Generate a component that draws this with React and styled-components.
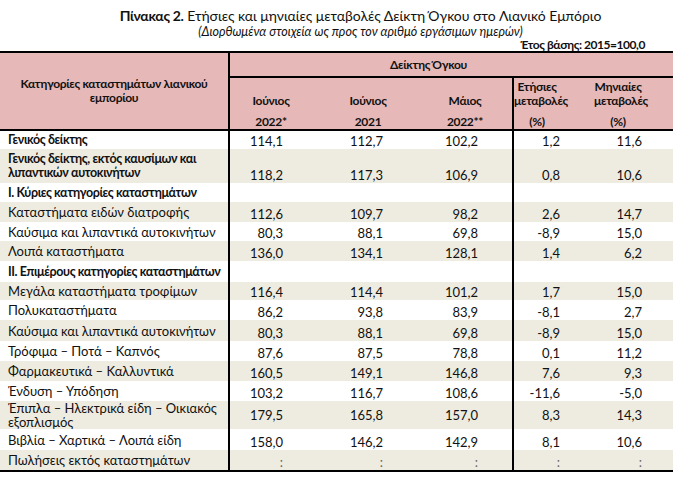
import React from "react";
import styled, { createGlobalStyle } from "styled-components";

const GlobalStyle = createGlobalStyle`
  html, body {
    margin: 0;
    padding: 0;
    background: #fff;
  }
  body {
    font-family: Lato, "Noto Sans", "Liberation Sans", sans-serif;
    color: #111;
  }
`;

const Page = styled.div`
  width: 673px;
  padding-top: 8px;
`;

const Title = styled.div`
  padding-left: 48px;
  text-align: center;
  font-size: 14px;
  line-height: 16px;

  b {
    letter-spacing: -0.3px;
  }
`;

const Subtitle = styled.div`
  padding-left: 48px;
  text-align: center;
  font-size: 12.5px;
  font-style: italic;
  line-height: 15px;
`;

const BaseYear = styled.div`
  text-align: right;
  padding-right: 28px;
  font-weight: 700;
  font-size: 12px;
  letter-spacing: -0.45px;
  line-height: 12px;
`;

const Table = styled.table`
  width: 673px;
  border-collapse: separate;
  border-spacing: 0;
  table-layout: fixed;
  font-size: 13px;
  border-top: 2px solid #000;
  border-bottom: 2px solid #000;
`;

const HeadCell = styled.th`
  background: #e6b8b7;
  font-weight: 700;
  font-size: 12px;
  letter-spacing: -0.3px;
  padding: 0;
  padding-right: ${p => p.$pad || 0}px;
  vertical-align: middle;
  text-align: center;
  line-height: 14px;
  height: ${p => (p.$h ? `${p.$h}px` : "auto")};
  border-right: ${p => (p.$divider ? "2px solid #000" : "none")};
  border-bottom: 2px solid #000;
`;

const HeadStack = styled.div`
  display: flex;
  flex-direction: column;
  height: 51px;
`;

const HeadTop = styled.div`
  flex: 1;
  display: flex;
  flex-direction: column;
  justify-content: flex-end;
  padding-bottom: 6px;
`;

const HeadSub = styled.div`
  height: 15px;
  line-height: 15px;
`;

const Row = styled.tr`
  height: ${p => p.$h}px;
  background: ${p => (p.$shade ? "#eeece1" : "#fff")};
`;

const LabelCell = styled.td`
  padding: 0 0 0 8px;
  border-right: 2px solid #000;
  vertical-align: middle;
  white-space: pre;
  font-weight: ${p => (p.$bold ? 700 : 400)};
  font-size: ${p => (p.$bold ? 12.5 : 13)}px;
  letter-spacing: ${p => (p.$bold ? -0.4 : 0)}px;
  line-height: 14px;
`;

const NumCell = styled.td`
  padding: 0 ${p => p.$pad}px 0 0;
  text-align: right;
  vertical-align: ${p => p.$valign || "bottom"};
  line-height: 15px;
  border-right: ${p => (p.$divider ? "2px solid #000" : "none")};
  color: ${p => (p.$empty ? "#666" : "#111")};
`;

const numPads = [42, 37, 34, 34, 31];

const rows = [
  { label: "Γενικός δείκτης", v: ["114,1", "112,7", "102,2", "1,2", "11,6"], bold: true, h: 18 },
  { label: "Γενικός δείκτης, εκτός καυσίμων και\nλιπαντικών αυτοκινήτων", v: ["118,2", "117,3", "106,9", "0,8", "10,6"], bold: true, h: 34 },
  { label: "I. Κύριες κατηγορίες καταστημάτων", v: null, bold: true, h: 19 },
  { label: "Καταστήματα ειδών διατροφής", v: ["112,6", "109,7", "98,2", "2,6", "14,7"], h: 20 },
  { label: "Καύσιμα και λιπαντικά αυτοκινήτων", v: ["80,3", "88,1", "69,8", "-8,9", "15,0"], h: 19 },
  { label: "Λοιπά καταστήματα", v: ["136,0", "134,1", "128,1", "1,4", "6,2"], h: 20 },
  { label: "II. Επιμέρους κατηγορίες καταστημάτων", v: null, bold: true, h: 21 },
  { label: "Μεγάλα καταστήματα τροφίμων", v: ["116,4", "114,4", "101,2", "1,7", "15,0"], h: 18 },
  { label: "Πολυκαταστήματα", v: ["86,2", "93,8", "83,9", "-8,1", "2,7"], h: 20 },
  { label: "Καύσιμα και λιπαντικά αυτοκινήτων", v: ["80,3", "88,1", "69,8", "-8,9", "15,0"], h: 21 },
  { label: "Τρόφιμα – Ποτά – Καπνός", v: ["87,6", "87,5", "78,8", "0,1", "11,2"], h: 20 },
  { label: "Φαρμακευτικά – Καλλυντικά", v: ["160,5", "149,1", "146,8", "7,6", "9,3"], h: 20 },
  { label: "Ένδυση – Υπόδηση", v: ["103,2", "116,7", "108,6", "-11,6", "-5,0"], h: 20 },
  { label: "Έπιπλα – Ηλεκτρικά είδη – Οικιακός\nεξοπλισμός", v: ["179,5", "165,8", "157,0", "8,3", "14,3"], h: 27, valign: "middle" },
  { label: "Βιβλία – Χαρτικά – Λοιπά είδη", v: ["158,0", "146,2", "142,9", "8,1", "10,6"], h: 21 },
  { label: "Πωλήσεις εκτός καταστημάτων", v: [":", ":", ":", ":", ":"], h: 20, empty: true },
];

const heads = [
  { top: ["Ιούνιος"], sub: "2022*", pad: 13 },
  { top: ["Ιούνιος"], sub: "2021", pad: 9 },
  { top: ["Μάιος"], sub: "2022**", pad: 2, divider: true },
  { top: ["Ετήσιες", "μεταβολές"], sub: "(%)", pad: 34 },
  { top: ["Μηνιαίες", "μεταβολές"], sub: "(%)", pad: 31 },
];

export default function App() {
  return (
    <Page>
      <GlobalStyle />
      <Title>
        <b>Πίνακας 2.</b> Ετήσιες και μηνιαίες μεταβολές Δείκτη Όγκου στο Λιανικό Εμπόριο
      </Title>
      <Subtitle>(Διορθωμένα στοιχεία ως προς τον αριθμό εργάσιμων ημερών)</Subtitle>
      <BaseYear>Έτος βάσης: 2015=100,0</BaseYear>
      <Table>
        <colgroup>
          <col style={{ width: 230 }} />
          <col style={{ width: 95 }} />
          <col style={{ width: 95 }} />
          <col style={{ width: 94 }} />
          <col style={{ width: 80 }} />
          <col style={{ width: 79 }} />
        </colgroup>
        <thead>
          <tr>
            <HeadCell rowSpan={2} $divider>
              Κατηγορίες καταστημάτων λιανικού
              <br />
              εμπορίου
            </HeadCell>
            <HeadCell colSpan={5} $pad={46} $h={23}>
              Δείκτης Όγκου
            </HeadCell>
          </tr>
          <tr>
            {heads.map((hd, i) => (
              <HeadCell key={i} $pad={hd.pad} $divider={hd.divider}>
                <HeadStack>
                  <HeadTop>
                    {hd.top.map(t => (
                      <div key={t}>{t}</div>
                    ))}
                  </HeadTop>
                  <HeadSub>{hd.sub}</HeadSub>
                </HeadStack>
              </HeadCell>
            ))}
          </tr>
        </thead>
        <tbody>
          {rows.map((r, i) => (
            <Row key={i} $h={r.h} $shade={i % 2 === 1}>
              <LabelCell $bold={r.bold}>{r.label}</LabelCell>
              {[0, 1, 2, 3, 4].map(c => (
                <NumCell
                  key={c}
                  $pad={numPads[c]}
                  $divider={c === 2}
                  $valign={r.valign}
                  $empty={r.empty}
                >
                  {r.v ? r.v[c] : ""}
                </NumCell>
              ))}
            </Row>
          ))}
        </tbody>
      </Table>
    </Page>
  );
}
